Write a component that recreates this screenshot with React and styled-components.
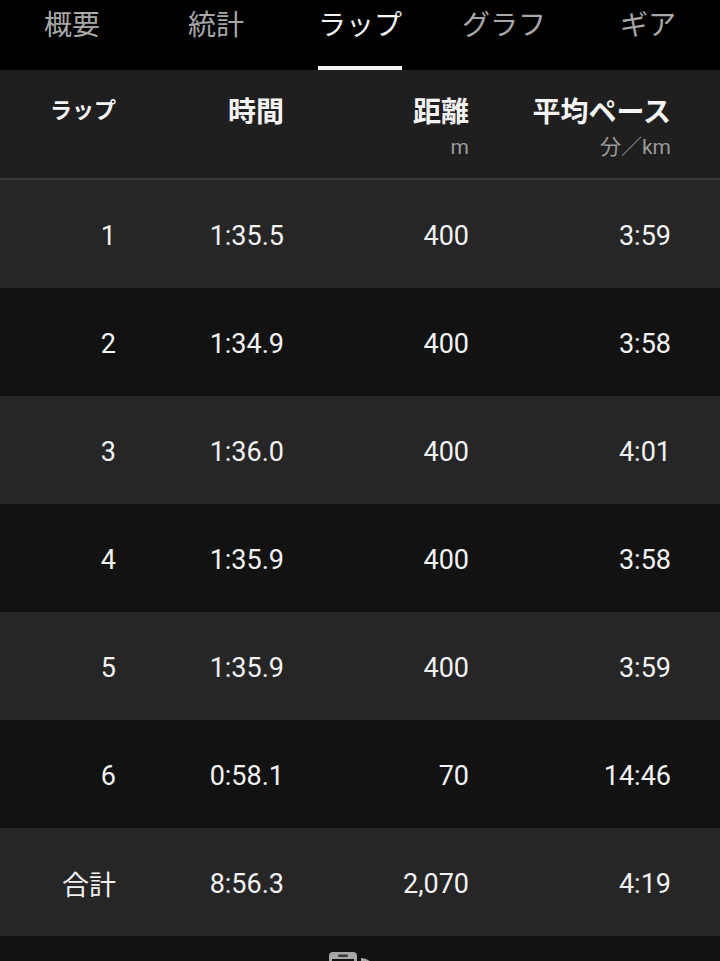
import React from "react";
import styled, { createGlobalStyle } from "styled-components";

const Global = createGlobalStyle`
  html, body { margin: 0; padding: 0; background: #121212; }
  body { font-family: Roboto, "Noto Sans CJK JP", sans-serif; -webkit-font-smoothing: antialiased; }
`;

const Screen = styled.div`
  width: 720px;
  height: 961px;
  overflow: hidden;
  background: #121212;
  display: flex;
  flex-direction: column;
`;

const TabBar = styled.nav`
  height: 70px;
  background: #000;
  display: grid;
  grid-template-columns: repeat(5, 1fr);
  flex-shrink: 0;
`;

const Tab = styled.div`
  display: flex;
  justify-content: center;
  align-items: flex-start;
  padding-top: 5px;
  font-family: "Noto Sans CJK JP", sans-serif;
  font-size: 28px;
  line-height: 36px;
  color: ${(p) => (p.$active ? "#f4f4f4" : "#a8a8a8")};
`;

const TabLabel = styled.span`
  position: relative;
  display: inline-block;
  height: 65px;
`;

const Underline = styled.span`
  position: absolute;
  left: 0;
  right: 0;
  bottom: 0;
  height: 4px;
  background: #f4f4f4;
`;

const Grid = styled.div`
  display: grid;
  grid-template-columns: 116px 168px 185px 1fr;
  padding-right: 49px;
  box-sizing: border-box;
  width: 720px;
`;

const HeaderRow = styled(Grid)`
  height: 110px;
  background: #1f1f1f;
  border-bottom: 2px solid #383838;
  flex-shrink: 0;
`;

const HeaderCell = styled.div`
  display: flex;
  flex-direction: column;
  align-items: flex-end;
  padding-top: 22px;
`;

const HeaderTitle = styled.div`
  font-family: "Noto Sans CJK JP", sans-serif;
  font-weight: 700;
  font-size: ${(p) => (p.$small ? "22px" : "28px")};
  line-height: 36px;
  color: #f4f4f4;
  margin-top: ${(p) => (p.$small ? "-2px" : "0")};
`;

const Unit = styled.div`
  font-family: Roboto, "Noto Sans CJK JP", sans-serif;
  font-size: 21px;
  line-height: 24px;
  margin-top: 7px;
  color: #9a9a9a;
`;

const Row = styled(Grid)`
  height: 108px;
  background: ${(p) => (p.$dark ? "#121212" : "#262626")};
  flex-shrink: 0;
`;

const Cell = styled.div`
  display: flex;
  align-items: center;
  justify-content: flex-end;
  font-family: Roboto, "Noto Sans CJK JP", sans-serif;
  font-size: 27px;
  color: #f2f2f2;
  padding-top: 3px;
`;

const Footer = styled.div`
  flex: 1;
  background: #121212;
  padding: 16px 0 0 328px;
  overflow: hidden;
`;

const laps = [
  ["1", "1:35.5", "400", "3:59"],
  ["2", "1:34.9", "400", "3:58"],
  ["3", "1:36.0", "400", "4:01"],
  ["4", "1:35.9", "400", "3:58"],
  ["5", "1:35.9", "400", "3:59"],
  ["6", "0:58.1", "70", "14:46"],
  ["合計", "8:56.3", "2,070", "4:19"],
];

const tabs = ["概要", "統計", "ラップ", "グラフ", "ギア"];

export default function App() {
  return (
    <>
      <Global />
      <Screen>
        <TabBar>
          {tabs.map((t) => (
            <Tab key={t} $active={t === "ラップ"}>
              <TabLabel>
                {t}
                {t === "ラップ" && <Underline />}
              </TabLabel>
            </Tab>
          ))}
        </TabBar>
        <HeaderRow>
          <HeaderCell>
            <HeaderTitle $small>ラップ</HeaderTitle>
          </HeaderCell>
          <HeaderCell>
            <HeaderTitle>時間</HeaderTitle>
          </HeaderCell>
          <HeaderCell>
            <HeaderTitle>距離</HeaderTitle>
            <Unit>m</Unit>
          </HeaderCell>
          <HeaderCell>
            <HeaderTitle>平均ペース</HeaderTitle>
            <Unit>分／km</Unit>
          </HeaderCell>
        </HeaderRow>
        {laps.map((r, i) => (
          <Row key={i} $dark={i % 2 === 1}>
            {r.map((v, j) => (
              <Cell key={j}>{v}</Cell>
            ))}
          </Row>
        ))}
        <Footer>
          <svg width="50" height="40" viewBox="0 0 50 40">
            <rect x="1" y="0" width="28" height="40" rx="4" fill="#a6a6a6" />
            <rect x="10" y="2.5" width="10" height="2.5" rx="1" fill="#3a3a3a" />
            <rect x="4" y="7" width="22" height="28" fill="#121212" />
            <path d="M33 6 a14 14 0 0 1 14 14 v20 h-14 z" fill="#a6a6a6" />
          </svg>
        </Footer>
      </Screen>
    </>
  );
}
